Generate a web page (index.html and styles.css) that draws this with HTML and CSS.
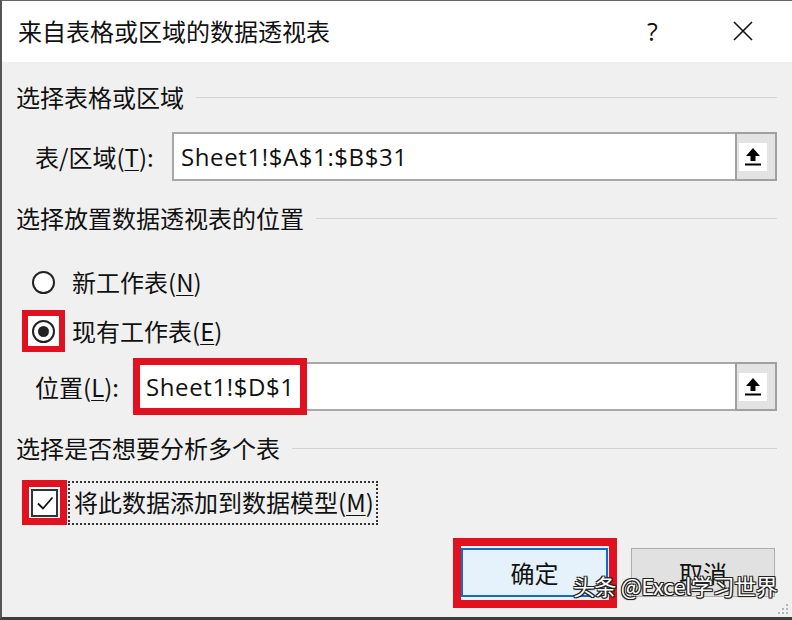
FILE: index.html
```html
<!DOCTYPE html>
<html lang="zh-CN">
<head>
<meta charset="utf-8">
<title>来自表格或区域的数据透视表</title>
<link rel="stylesheet" href="styles.css">
</head>
<body>
<div class="dialog">
  <div class="titlebar">
    <div class="title">来自表格或区域的数据透视表</div>
    <div class="help">?</div>
    <svg class="close" width="22" height="22" viewBox="0 0 22 22"><path d="M2 2 L20 20 M20 2 L2 20" stroke="#111" stroke-width="1.6" fill="none"/></svg>
  </div>
  <div class="content">
    <div class="section s1"><span class="section-text">选择表格或区域</span><span class="rule"></span></div>
    <div class="field f1">
      <span class="label label-wide">表/区域(<u>T</u>):</span>
      <div class="input"><span class="input-text">Sheet1!$A$1:$B$31</span></div>
      <div class="pick">
        <span class="pick-inner"><svg width="20" height="20" viewBox="0 0 20 20"><path d="M10 1 L17 9 L12.5 9 L12.5 14 L7.5 14 L7.5 9 L3 9 Z" fill="#000"/><rect x="2" y="16.5" width="16" height="2" fill="#000"/></svg></span>
      </div>
    </div>
    <div class="section s2"><span class="section-text">选择放置数据透视表的位置</span><span class="rule"></span></div>
    <div class="option o1">
      <span class="mark"><span class="radio"></span></span>
      <span class="opt-text">新工作表(<u>N</u>)</span>
    </div>
    <div class="option o2">
      <span class="mark marked"><span class="radio checked"><span class="dot"></span></span></span>
      <span class="opt-text">现有工作表(<u>E</u>)</span>
    </div>
    <div class="field f2">
      <span class="label label-narrow">位置(<u>L</u>):</span>
      <div class="input"><span class="input-text highlighted">Sheet1!$D$1</span></div>
      <div class="pick">
        <span class="pick-inner"><svg width="20" height="20" viewBox="0 0 20 20"><path d="M10 1 L17 9 L12.5 9 L12.5 14 L7.5 14 L7.5 9 L3 9 Z" fill="#000"/><rect x="2" y="16.5" width="16" height="2" fill="#000"/></svg></span>
      </div>
    </div>
    <div class="section s3"><span class="section-text">选择是否想要分析多个表</span><span class="rule"></span></div>
    <div class="option o3">
      <span class="mark marked cb-mark"><span class="checkbox"><svg width="20" height="20" viewBox="0 0 20 20"><path d="M3 10.5 L8 15.5 L17.5 4.5" stroke="#111" stroke-width="1.8" fill="none"/></svg></span></span>
      <span class="opt-text focus">将此数据添加到数据模型(<u>M</u>)</span>
    </div>
    <div class="buttons">
      <button class="btn primary">确定</button>
      <button class="btn">取消</button>
    </div>
  </div>
  <div class="watermark">头条 @Excel学习世界</div>
  <svg class="grip" width="14" height="14" viewBox="0 0 14 14">
    <rect x="10" y="2" width="2" height="2" fill="#b5b5b5"/>
    <rect x="6" y="6" width="2" height="2" fill="#b5b5b5"/><rect x="10" y="6" width="2" height="2" fill="#b5b5b5"/>
    <rect x="2" y="10" width="2" height="2" fill="#b5b5b5"/><rect x="6" y="10" width="2" height="2" fill="#b5b5b5"/><rect x="10" y="10" width="2" height="2" fill="#b5b5b5"/>
  </svg>
</div>
</body>
</html>
```
FILE: styles.css
```css
* { box-sizing: border-box; }
html, body { margin: 0; padding: 0; }
body {
  width: 792px;
  height: 620px;
  overflow: hidden;
  font-family: "Noto Sans CJK SC", "Open Sans", sans-serif;
  color: #111;
}
.dialog {
  position: relative;
  width: 792px;
  height: 620px;
  background: #f0f0f0;
  border-left: 2px solid #555;
  border-top: 1px solid #666;
  border-bottom: 3px solid #3c3c3c;
  display: flex;
  flex-direction: column;
}
.titlebar {
  height: 61px;
  background: #fff;
  display: flex;
  align-items: center;
  padding-left: 16px;
  flex: none;
}
.title {
  font-size: 24px;
  line-height: 30px;
  flex: 1;
  margin-top: -1px;
}
.help {
  font-family: "Open Sans", sans-serif;
  font-size: 25px;
  line-height: 30px;
  width: 14px;
  margin-right: 71px;
  margin-top: -2px;
}
.close {
  margin-right: 38px;
  margin-top: -2px;
}
.content {
  padding: 0 15px 0 14px;
  display: flex;
  flex-direction: column;
  font-size: 24px;
}
u { text-decoration-thickness: 1px; text-underline-offset: 3px; }
.section {
  height: 30px;
  display: flex;
  align-items: center;
}
.section-text { line-height: 30px; white-space: nowrap; }
.rule {
  flex: 1;
  height: 1px;
  background: #d3d3d3;
  margin-left: 12px;
  margin-top: 1px;
}
.s1 { margin-top: 20px; }
.s2 { margin-top: 22px; }
.s3 { margin-top: 22px; }
.field {
  height: 49px;
  display: flex;
  align-items: stretch;
  margin-left: 19px;
}
.f1 { margin-top: 20px; }
.f2 { margin-top: 10px; }
.label {
  display: flex;
  align-items: center;
  white-space: nowrap;
  flex: none;
}
.label-wide { width: 137px; }
.label-narrow { width: 102px; }
.input {
  flex: 1;
  background: #fff;
  border: 2px solid #a8a8a8;
  border-right: none;
  display: flex;
  align-items: center;
  padding-left: 7px;
  position: relative;
}
.input-text {
  font-family: "Open Sans", "Noto Sans CJK SC", sans-serif;
  font-size: 24px;
  letter-spacing: 0.6px;
  white-space: nowrap;
}
.highlighted { position: relative; }
.highlighted::after {
  content: "";
  position: absolute;
  left: -13px;
  right: -12px;
  top: -12px;
  bottom: -12px;
  border: 7px solid #e0121f;
}
.pick {
  width: 42px;
  flex: none;
  border: 2px solid #a0a0a0;
  background: #e3e3e3;
  display: flex;
  align-items: center;
  padding-left: 2px;
}
.pick-inner {
  width: 28px;
  height: 28px;
  background: #fff;
  display: flex;
  align-items: center;
  justify-content: center;
}
.option {
  height: 42px;
  display: flex;
  align-items: center;
  margin-left: 6px;
}
.o1 { margin-top: 28px; }
.o2 { margin-top: 7px; }
.o3 { margin-top: 17px; height: 45px; }
.mark {
  width: 43px;
  height: 42px;
  display: flex;
  align-items: center;
  justify-content: center;
  flex: none;
  border: 6px solid transparent;
}
.marked {
  border-color: #e0121f;
  background: #fff;
}
.cb-mark {
  width: 45px;
  height: 45px;
  border-width: 7px;
}
.radio {
  width: 23px;
  height: 23px;
  border-radius: 50%;
  border: 2px solid #222;
  background: #fff;
  display: flex;
  align-items: center;
  justify-content: center;
}
.dot {
  width: 11px;
  height: 11px;
  border-radius: 50%;
  background: #222;
}
.checkbox {
  width: 27px;
  height: 28px;
  border: 2px solid #333;
  background: #fff;
  display: flex;
  align-items: center;
  justify-content: center;
}
.opt-text {
  margin-left: 7px;
  white-space: nowrap;
  line-height: 30px;
}
.focus {
  margin-left: 1px;
  padding: 4px 2px 6px 4px;
  border: 2px dotted #333;
}
.buttons {
  display: flex;
  justify-content: flex-end;
  gap: 23px;
  margin-top: 23px;
  margin-right: 2px;
}
.btn {
  height: 49px;
  width: 144px;
  font-family: "Noto Sans CJK SC", sans-serif;
  font-size: 24px;
  color: #111;
  background: #e1e1e1;
  border: 1px solid #adadad;
  padding: 0;
  position: relative;
}
.primary {
  width: 147px;
  background: #e5f1fb;
  border: 2px solid #0f6cc9;
}
.primary::after {
  content: "";
  position: absolute;
  left: -10px;
  right: -11px;
  top: -12px;
  bottom: -13px;
  border: 8px solid #e0121f;
}
.watermark {
  position: absolute;
  left: 571px;
  top: 569px;
  font-family: "Noto Sans CJK SC", sans-serif;
  font-size: 22px;
  line-height: 30px;
  color: #fff;
  letter-spacing: -0.4px;
  text-shadow: 1px 1px 0 #222, -1px -1px 0 #222, 1px -1px 0 #222, -1px 1px 0 #222, 0 1px 1px #222, 1px 0 1px #222;
}
.grip {
  position: absolute;
  right: 2px;
  bottom: 1px;
}
```
